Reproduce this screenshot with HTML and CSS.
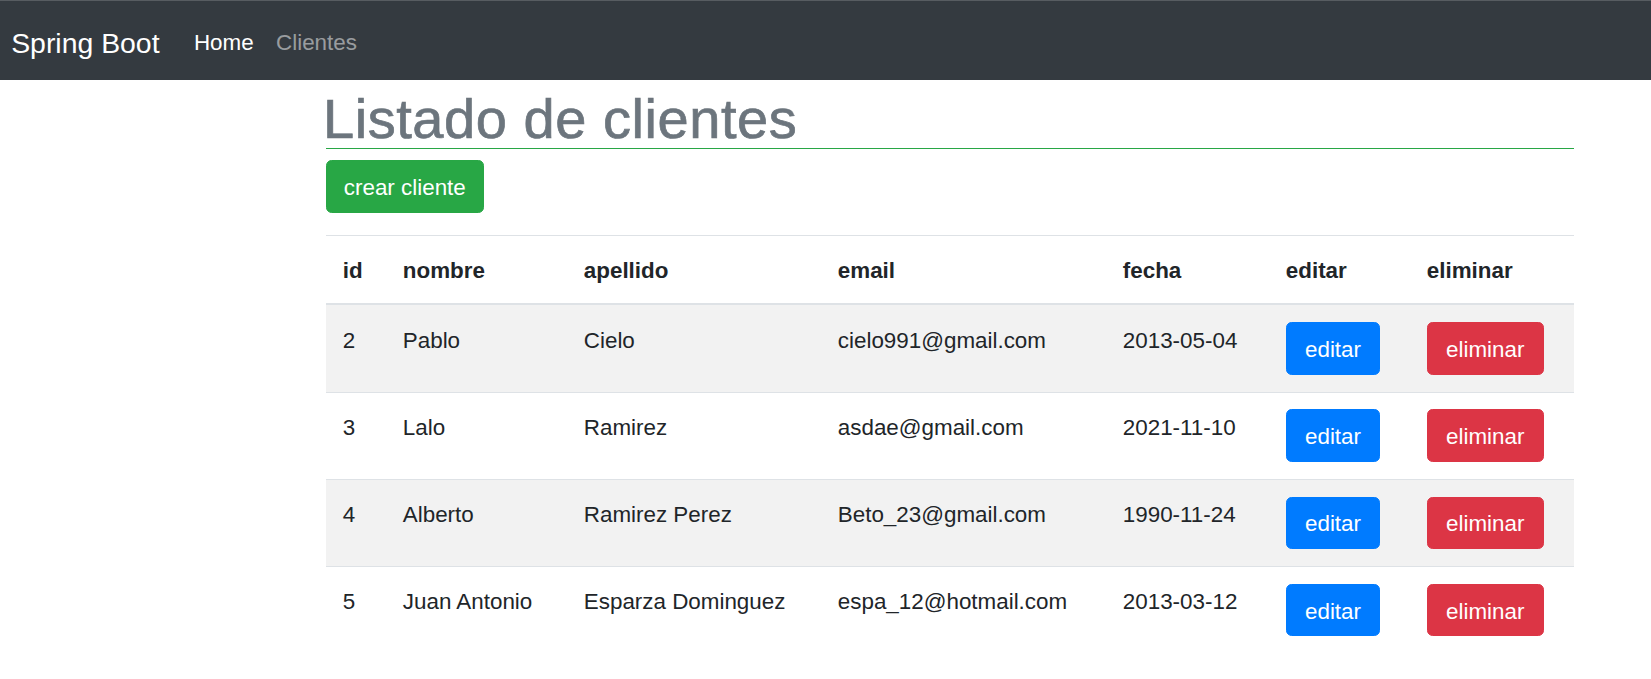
FILE: index.html
```html
<!DOCTYPE html>
<html lang="es">
<head>
<meta charset="utf-8">
<title>Listado de clientes</title>
<link rel="stylesheet" href="styles.css">
</head>
<body>
<nav class="navbar">
  <a class="brand" href="#">Spring Boot</a>
  <ul class="nav-links">
    <li><a class="nav-link active" href="#">Home</a></li>
    <li><a class="nav-link" href="#">Clientes</a></li>
  </ul>
</nav>
<main class="container">
  <h1 class="title">Listado de clientes</h1>
  <a class="btn btn-success" href="#">crear cliente</a>
  <table class="table">
    <colgroup>
      <col class="c-id"><col class="c-nombre"><col class="c-apellido"><col class="c-email"><col class="c-fecha"><col class="c-editar"><col class="c-eliminar">
    </colgroup>
    <thead>
      <tr><th>id</th><th>nombre</th><th>apellido</th><th>email</th><th>fecha</th><th>editar</th><th>eliminar</th></tr>
    </thead>
    <tbody>
      <tr><td>2</td><td>Pablo</td><td>Cielo</td><td>cielo991@gmail.com</td><td>2013-05-04</td><td class="act"><a class="btn btn-primary" href="#">editar</a></td><td class="act"><a class="btn btn-danger" href="#">eliminar</a></td></tr>
      <tr><td>3</td><td>Lalo</td><td>Ramirez</td><td>asdae@gmail.com</td><td>2021-11-10</td><td class="act"><a class="btn btn-primary" href="#">editar</a></td><td class="act"><a class="btn btn-danger" href="#">eliminar</a></td></tr>
      <tr><td>4</td><td>Alberto</td><td>Ramirez Perez</td><td>Beto_23@gmail.com</td><td>1990-11-24</td><td class="act"><a class="btn btn-primary" href="#">editar</a></td><td class="act"><a class="btn btn-danger" href="#">eliminar</a></td></tr>
      <tr><td>5</td><td>Juan Antonio</td><td>Esparza Dominguez</td><td>espa_12@hotmail.com</td><td>2013-03-12</td><td class="act"><a class="btn btn-primary" href="#">editar</a></td><td class="act"><a class="btn btn-danger" href="#">eliminar</a></td></tr>
    </tbody>
  </table>
</main>
</body>
</html>
```
FILE: styles.css
```css
* { box-sizing: border-box; }

body {
  margin: 0;
  font-family: "Liberation Sans", Arial, sans-serif;
  font-size: 22.4px;
  line-height: 1.5;
  color: #212529;
  background: #fff;
}

a { text-decoration: none; }

.navbar {
  height: 80px;
  background: #343a40;
  border-top: 1px solid #575c61;
  display: flex;
  align-items: center;
  padding: 4px 11.2px 0;
}

.brand {
  font-size: 28.4px;
  line-height: 42px;
  color: #fff;
  margin-right: 23.2px;
}

.nav-links {
  display: flex;
  list-style: none;
  margin: 0;
  padding: 0;
}

.nav-link {
  display: block;
  padding: 0 11.2px;
  line-height: 33.6px;
  color: rgba(255, 255, 255, 0.5);
}

.nav-link.active { color: #fff; }

.container {
  margin-left: 326px;
  width: 1248px;
}

.title {
  margin: 0 0 11.2px;
  padding-top: 9px;
  font-size: 56px;
  line-height: 59.2px;
  font-weight: 400;
  letter-spacing: 0.55px;
  text-indent: -3px;
  color: #6c757d;
  -webkit-text-stroke: 0.7px #6c757d;
  border-bottom: 1px solid #28a745;
}

.btn {
  display: inline-block;
  padding: 9.9px 16.8px 6.9px;
  font-size: 22.4px;
  line-height: 33.6px;
  color: #fff;
  border: 1px solid transparent;
  border-radius: 5.6px;
  vertical-align: top;
}

.table .btn { padding-left: 18.2px; padding-right: 18.2px; }

.btn-success { background: #28a745; border-color: #28a745; }
.btn-primary { background: #007bff; border-color: #007bff; }
.btn-danger  { background: #dc3545; border-color: #dc3545; }

.table {
  width: 1248px;
  margin-top: 22.4px;
  border-collapse: collapse;
  table-layout: fixed;
}

.c-id { width: 60px; }
.c-nombre { width: 181px; }
.c-apellido { width: 254px; }
.c-email { width: 285px; }
.c-fecha { width: 163px; }
.c-editar { width: 141px; }
.c-eliminar { width: 164px; }

.table th,
.table td {
  text-align: left;
  vertical-align: top;
  padding: 18.3px 16.8px 15.3px;
  border-top: 1px solid #dee2e6;
  white-space: nowrap;
}

.table th { font-weight: 700; }

.table thead th { border-bottom: 2px solid #dee2e6; }

.table td.act { padding-top: 16.9px; padding-bottom: 16.9px; }

.table tbody tr:nth-child(odd) { background: #f2f2f2; }
```
